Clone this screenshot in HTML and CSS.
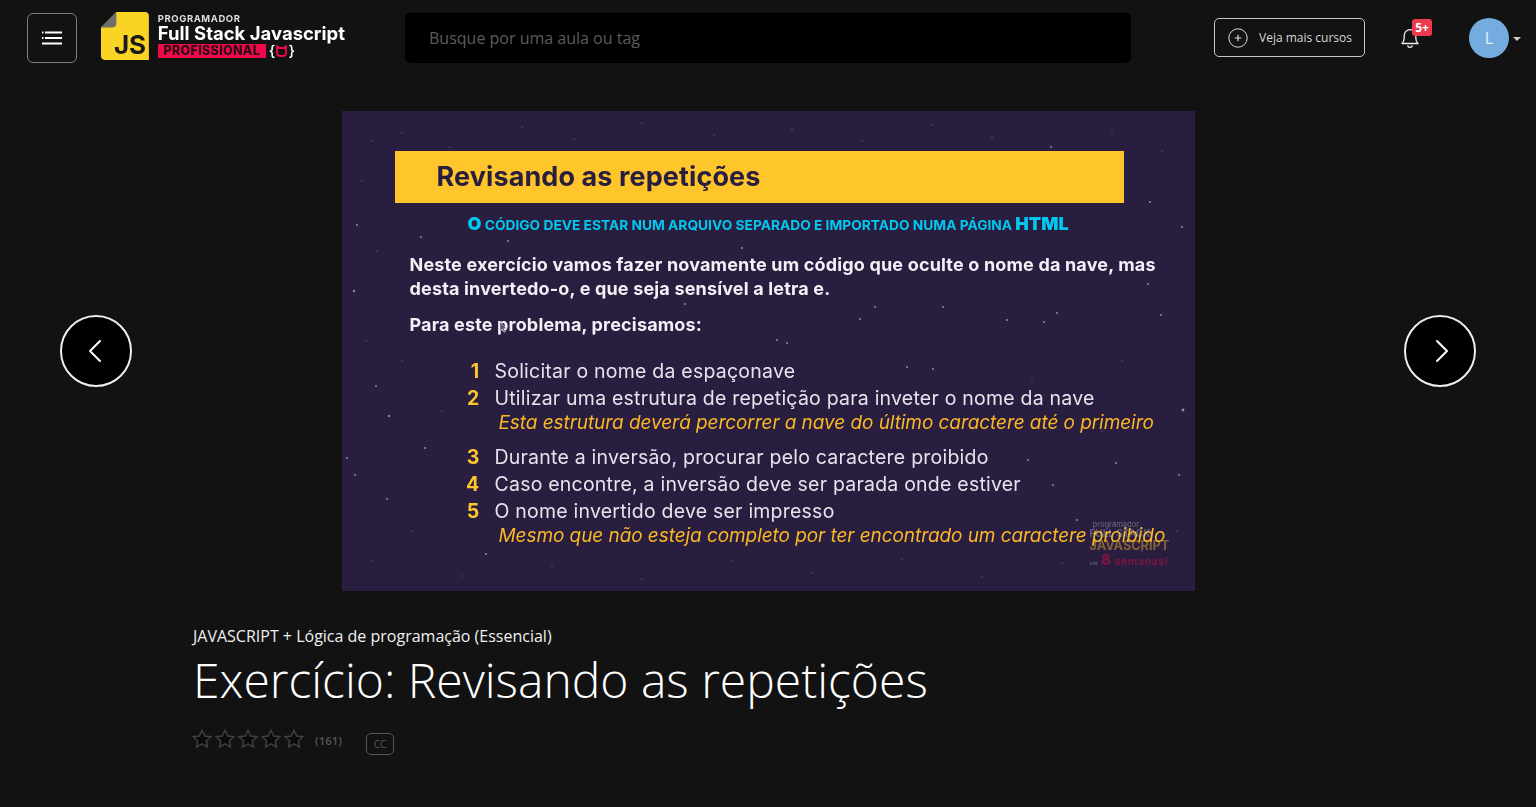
FILE: index.html
```html
<!DOCTYPE html>
<html lang="en">
<head>
    <meta charset="UTF-8">
    <meta name="viewport" content="width=device-width, initial-scale=1.0">
    <title>Exercício: Revisando as repetições</title>
    <link rel="stylesheet" href="styles.css">
</head>
<body>
    <header class="topbar">
        <button class="menu-btn" aria-label="Menu">
            <svg width="20" height="14" viewBox="0 0 20 14">
                <path d="M3 1.500h17M0 1.500h1.500M3 7h17M0 7h1.500M0 12.500h20" stroke="#fff" stroke-width="2" fill="none"/>
            </svg>
        </button>

        <div class="logo">
            <svg class="logo-icon" width="50" height="50" viewBox="0 0 50 50">
                <path d="M16 0h30a4 4 0 0 1 4 4v46H4a4 4 0 0 1-4-4V16z" fill="#fad424"/>
                <path d="M16 0v12a4 4 0 0 1-4 4H0z" fill="#6e6e6e"/>
            </svg>
            <span class="logo-js">JS</span>
            <div class="logo-text">
                <span class="logo-small">PROGRAMADOR</span>
                <span class="logo-big">Full Stack Javascript</span>
                <span class="logo-row">
                    <span class="logo-pro">PROFISSIONAL</span>
                    <span class="logo-brace">{<svg width="11" height="12" viewBox="0 0 11 12"><path d="M1 1l2 2h5l2-2v7a3 3 0 0 1-3 3H4a3 3 0 0 1-3-3z" fill="none" stroke="#f0094a" stroke-width="1.800"/></svg>}</span>
                </span>
            </div>
        </div>

        <div class="search">Busque por uma aula ou tag</div>

        <div class="topbar-right">
            <button class="more-btn">
                <svg width="20" height="20" viewBox="0 0 20 20">
                    <circle cx="10" cy="10" r="9.200" fill="none" stroke="#ddd" stroke-width="1"/>
                    <path d="M10 6.800v6.400M6.800 10h6.400" stroke="#ddd" stroke-width="1.200"/>
                </svg>
                Veja mais cursos
            </button>
            <div class="bell">
                <svg width="18" height="22" viewBox="0 0 18 22">
                    <path d="M1 16.500c1.600-1.400 2.200-2.600 2.200-5.500V8.500a5.800 5.800 0 0 1 11.600 0V11c0 2.900.6 4.100 2.200 5.500z" fill="none" stroke="#eee" stroke-width="1.300" stroke-linejoin="round"/>
                    <path d="M6.500 18.500a2.600 2.600 0 0 0 5 0" fill="none" stroke="#eee" stroke-width="1.300"/>
                </svg>
                <span class="badge">5+</span>
            </div>
            <div class="avatar">L</div>
            <span class="caret"></span>
        </div>
    </header>

    <main>
        <section class="player">
            <button class="arrow arrow-prev" aria-label="Anterior">
                <svg width="16" height="24" viewBox="0 0 16 24"><path d="M13 2L3 12l10 10" fill="none" stroke="#fff" stroke-width="2" stroke-linecap="round" stroke-linejoin="round"/></svg>
            </button>

            <div class="slide">
                <svg class="slide-stars" width="853" height="480" viewBox="0 0 853 480" fill="#8f88a8">
                    <circle cx="15" cy="114" r="1"/><circle cx="12" cy="180" r="1.200"/><circle cx="79" cy="126" r="1"/>
                    <circle cx="166" cy="130" r="1"/><circle cx="400" cy="137" r="1"/><circle cx="343" cy="193" r="1"/>
                    <circle cx="808" cy="91" r="1"/><circle cx="840" cy="116" r="1"/><circle cx="715" cy="202" r="1"/>
                    <circle cx="665" cy="209" r="1"/><circle cx="702" cy="211" r="1"/><circle cx="601" cy="196" r="1"/>
                    <circle cx="533" cy="196" r="1"/><circle cx="518" cy="208" r="1"/><circle cx="819" cy="204" r="1"/>
                    <circle cx="435" cy="229" r="1"/><circle cx="445" cy="232" r="1"/><circle cx="806" cy="173" r="1"/>
                    <circle cx="709" cy="36" r="1"/><circle cx="47" cy="305" r="1.200"/><circle cx="13" cy="364" r="1"/>
                    <circle cx="5" cy="347" r="1"/><circle cx="34" cy="275" r="1"/><circle cx="83" cy="337" r="1"/>
                    <circle cx="45" cy="388" r="1"/><circle cx="144" cy="443" r="1"/><circle cx="841" cy="299" r="1.400"/>
                    <circle cx="565" cy="256" r="1"/><circle cx="591" cy="258" r="1"/><circle cx="686" cy="349" r="1"/>
                    <circle cx="774" cy="352" r="1"/><circle cx="837" cy="364" r="1"/><circle cx="711" cy="374" r="1"/>
                    <circle cx="735" cy="409" r="1"/>
                    <g opacity=".45">
                        <circle cx="30" cy="30" r=".8"/><circle cx="60" cy="22" r=".8"/><circle cx="108" cy="36" r=".8"/>
                        <circle cx="180" cy="16" r=".8"/><circle cx="232" cy="28" r=".8"/><circle cx="300" cy="12" r=".8"/>
                        <circle cx="372" cy="24" r=".8"/><circle cx="450" cy="18" r=".8"/><circle cx="520" cy="30" r=".8"/>
                        <circle cx="590" cy="14" r=".8"/><circle cx="650" cy="26" r=".8"/><circle cx="770" cy="20" r=".8"/>
                        <circle cx="820" cy="40" r=".8"/><circle cx="20" cy="70" r=".8"/><circle cx="35" cy="140" r=".8"/>
                        <circle cx="24" cy="230" r=".8"/><circle cx="60" cy="250" r=".8"/><circle cx="100" cy="300" r=".8"/>
                        <circle cx="70" cy="420" r=".8"/><circle cx="30" cy="450" r=".8"/><circle cx="120" cy="465" r=".8"/>
                        <circle cx="210" cy="455" r=".8"/><circle cx="300" cy="468" r=".8"/><circle cx="390" cy="450" r=".8"/>
                        <circle cx="470" cy="462" r=".8"/><circle cx="560" cy="448" r=".8"/><circle cx="640" cy="466" r=".8"/>
                        <circle cx="720" cy="452" r=".8"/><circle cx="800" cy="440" r=".8"/><circle cx="835" cy="420" r=".8"/>
                        <circle cx="780" cy="250" r=".8"/><circle cx="690" cy="270" r=".8"/><circle cx="760" cy="320" r=".8"/>
                    </g>
                </svg>

                <div class="slide-content">
                    <h1 class="slide-title">Revisando as repetições</h1>
                    <p class="slide-sub"><b>O</b> CÓDIGO DEVE ESTAR NUM ARQUIVO SEPARADO E IMPORTADO NUMA PÁGINA <b>HTML</b></p>
                    <p class="slide-text">Neste exercício vamos fazer novamente um código que oculte o nome da nave, mas<br>desta invertedo-o, e que seja sensível a letra e.</p>
                    <p class="slide-text slide-need">Para este problema, precisamos:</p>

                    <ol class="steps">
                        <li class="step"><span class="num">1</span>Solicitar o nome da espaçonave</li>
                        <li class="step"><span class="num">2</span>Utilizar uma estrutura de repetição para inveter o nome da nave</li>
                        <li class="note">Esta estrutura deverá percorrer a nave do último caractere até o primeiro</li>
                        <li class="step step-gap"><span class="num">3</span>Durante a inversão, procurar pelo caractere proibido</li>
                        <li class="step"><span class="num">4</span>Caso encontre, a inversão deve ser parada onde estiver</li>
                        <li class="step"><span class="num">5</span>O nome invertido deve ser impresso</li>
                        <li class="note">Mesmo que não esteja completo por ter encontrado um caractere proibido</li>
                    </ol>
                </div>

                <svg class="slide-cursor" width="8" height="12" viewBox="0 0 8 12"><path d="M1 1v9l2.200-2 1.800 3.500 1.500-.8L4.800 7.500H7.500z" fill="#5d566f" stroke="#cfcfd6" stroke-width=".6"/></svg>

                <div class="watermark">
                    <span class="wm-small">programador</span>
                    <span class="wm-mid">FULL STACK</span>
                    <span class="wm-big">JAVASCRIPT</span>
                    <span class="wm-red"><i>em</i> <b>8</b> semanas!</span>
                </div>
            </div>

            <button class="arrow arrow-next" aria-label="Próximo">
                <svg width="16" height="24" viewBox="0 0 16 24"><path d="M3 2l10 10L3 22" fill="none" stroke="#fff" stroke-width="2" stroke-linecap="round" stroke-linejoin="round"/></svg>
            </button>
        </section>

        <section class="info">
            <div class="course">JAVASCRIPT + Lógica de programação (Essencial)</div>
            <h2 class="lesson">Exercício: Revisando as repetições</h2>
            <div class="meta">
                <div class="stars">
                    <svg width="20" height="19" viewBox="0 0 24 23"><path class="star" d="M12 1.500l3.200 6.900 7.500.9-5.500 5.100 1.400 7.400L12 18.100l-6.600 3.700 1.400-7.400L1.300 9.300l7.500-.9z"/></svg>
                    <svg width="20" height="19" viewBox="0 0 24 23"><path class="star" d="M12 1.500l3.200 6.900 7.500.9-5.500 5.100 1.400 7.400L12 18.100l-6.600 3.700 1.400-7.400L1.300 9.300l7.500-.9z"/></svg>
                    <svg width="20" height="19" viewBox="0 0 24 23"><path class="star" d="M12 1.500l3.200 6.900 7.500.9-5.500 5.100 1.400 7.400L12 18.100l-6.600 3.700 1.400-7.400L1.300 9.300l7.500-.9z"/></svg>
                    <svg width="20" height="19" viewBox="0 0 24 23"><path class="star" d="M12 1.500l3.200 6.900 7.500.9-5.500 5.100 1.400 7.400L12 18.100l-6.600 3.700 1.400-7.400L1.300 9.300l7.500-.9z"/></svg>
                    <svg width="20" height="19" viewBox="0 0 24 23"><path class="star" d="M12 1.500l3.200 6.900 7.500.9-5.500 5.100 1.400 7.400L12 18.100l-6.600 3.700 1.400-7.400L1.300 9.300l7.500-.9z"/></svg>
                </div>
                <span class="votes">(161)</span>
                <span class="cc">CC</span>
            </div>
        </section>
    </main>
</body>
</html>
```

FILE: styles.css
```css
* {
    box-sizing: border-box;
}

body {
    margin: 0;
    height: 807px;
    overflow: hidden;
    background-color: #121212;
    color: #fff;
    font-family: "Open Sans", sans-serif;
}

button {
    font-family: inherit;
    cursor: pointer;
}

/* top bar */
.topbar {
    display: flex;
    align-items: center;
    height: 75px;
    padding: 0 15px 0 27px;
}

.menu-btn {
    display: flex;
    align-items: center;
    justify-content: center;
    width: 50px;
    height: 50px;
    padding: 0;
    background: transparent;
    border: 1px solid #7c7c7c;
    border-radius: 6px;
}

.logo {
    position: relative;
    display: flex;
    gap: 9px;
    width: 244px;
    height: 50px;
    margin: 0 0 4px 24px;
    filter: blur(.3px);
}

.logo-js {
    position: absolute;
    left: 13px;
    top: 19px;
    color: #1b1b1b;
    font-family: "Inter", sans-serif;
    font-size: 26px;
    line-height: 30px;
    font-weight: 700;
    letter-spacing: -.3px;
}

.logo-text {
    display: flex;
    flex-direction: column;
    font-family: "Inter", sans-serif;
    font-weight: 700;
}

.logo-small {
    margin-top: 2px;
    color: #ddd;
    font-size: 9.500px;
    line-height: 11px;
    letter-spacing: .55px;
}

.logo-big {
    font-size: 18.500px;
    line-height: 19px;
    letter-spacing: 0;
    white-space: nowrap;
}

.logo-row {
    display: flex;
    align-items: center;
    gap: 3px;
    margin-top: 1px;
}

.logo-pro {
    width: 108px;
    height: 14px;
    background-color: #f0094a;
    color: #2a0a16;
    font-size: 12.500px;
    line-height: 14px;
    font-weight: 800;
    letter-spacing: .3px;
    text-align: center;
    white-space: nowrap;
}

.logo-brace {
    display: flex;
    align-items: center;
    gap: 1px;
    font-size: 15px;
    line-height: 14px;
    font-weight: 500;
}

.search {
    width: 726px;
    height: 50px;
    margin-left: 60px;
    padding-left: 24px;
    background-color: #000;
    border-radius: 5px;
    color: #5c5c5c;
    font-size: 16px;
    line-height: 50px;
}

.topbar-right {
    display: flex;
    align-items: center;
    margin-left: auto;
}

.more-btn {
    display: flex;
    align-items: center;
    gap: 11px;
    width: 151px;
    height: 39px;
    padding: 0 0 0 13px;
    background: transparent;
    border: 1px solid #c8c8c8;
    border-radius: 5px;
    color: #d8d8d8;
    font-size: 12px;
    font-weight: 400;
    white-space: nowrap;
}

.bell {
    position: relative;
    display: flex;
    width: 18px;
    height: 22px;
    margin-left: 36px;
}

.badge {
    position: absolute;
    left: 11px;
    top: -8px;
    width: 20px;
    height: 17px;
    background-color: #ed3a4f;
    border-radius: 3px;
    font-size: 12px;
    line-height: 17px;
    font-weight: 700;
    text-align: center;
}

.avatar {
    width: 40px;
    height: 40px;
    margin-left: 50px;
    background-color: #75ace0;
    border-radius: 50%;
    color: #eaf2fa;
    font-size: 16px;
    line-height: 40px;
    text-align: center;
}

.caret {
    width: 0;
    height: 0;
    margin: 2px 0 0 4px;
    border-top: 4px solid #ccc;
    border-left: 4px solid transparent;
    border-right: 4px solid transparent;
}

/* player */
.player {
    display: flex;
    align-items: center;
    justify-content: space-between;
    margin-top: 36px;
    padding: 0 60px;
}

.arrow {
    display: flex;
    align-items: center;
    justify-content: center;
    width: 72px;
    height: 72px;
    padding: 0;
    background-color: #000;
    border: 2px solid #eee;
    border-radius: 50%;
}

.arrow-prev {
    padding-right: 3px;
}

.arrow-next {
    padding-left: 3px;
}

.slide {
    position: relative;
    width: 853px;
    height: 480px;
    overflow: hidden;
    background-color: #291e3f;
    font-family: "Inter", sans-serif;
}

.slide-stars {
    position: absolute;
    left: 0;
    top: 0;
}

.slide-content {
    position: relative;
    padding-top: 40px;
    filter: blur(.35px);
}

.slide-title {
    width: 729px;
    height: 52px;
    margin: 0 0 0 53px;
    padding-left: 42px;
    background-color: #fec62a;
    color: #291e3f;
    font-size: 27px;
    line-height: 52px;
    font-weight: 700;
    letter-spacing: .1px;
}

.slide-sub {
    margin: 9px 0 0;
    padding-left: 126px;
    color: #00c8f0;
    font-size: 13.750px;
    line-height: 24px;
    font-weight: 700;
    white-space: nowrap;
}

.slide-sub b {
    font-size: 18px;
}

.slide-text {
    margin: 16px 0 0 68px;
    color: #f3f1f6;
    font-size: 18px;
    line-height: 24px;
    font-weight: 700;
    letter-spacing: .17px;
    white-space: nowrap;
}

.slide-need {
    margin-top: 12px;
}

.steps {
    margin: 21px 0 0;
    padding: 0;
    list-style: none;
    white-space: nowrap;
}

.step {
    display: flex;
    gap: 15px;
    margin-top: 1px;
    color: #e6e3ec;
    font-size: 19.500px;
    line-height: 26px;
    letter-spacing: .22px;
}

.step:first-child {
    margin-top: 0;
}

.step-gap {
    margin-top: 8px;
}

.num {
    width: 138px;
    color: #fec62a;
    font-weight: 700;
    text-align: right;
}

.note {
    margin: -1px 0 0 157px;
    color: #fbb826;
    font-size: 19px;
    line-height: 26px;
    font-style: italic;
    letter-spacing: -.07px;
}

.slide-cursor {
    position: absolute;
    left: 157px;
    top: 210px;
}

.watermark {
    position: absolute;
    left: 748px;
    top: 410px;
    display: flex;
    flex-direction: column;
    width: 84px;
    font-weight: 700;
    opacity: .4;
    white-space: nowrap;
}

.wm-small {
    margin-left: 3px;
    color: #bbb;
    font-size: 7.500px;
    line-height: 7px;
    font-weight: 500;
}

.wm-mid {
    color: #bbb;
    font-size: 10px;
    line-height: 11px;
}

.wm-big {
    color: #fec62a;
    font-size: 12.700px;
    line-height: 14px;
}

.wm-red {
    color: #f0094a;
    font-size: 10.500px;
    line-height: 14px;
    letter-spacing: .5px;
}

.wm-red i {
    color: #bbb;
    font-size: 5px;
}

.wm-red b {
    font-size: 15px;
}

/* lesson info */
.info {
    padding: 34px 0 0 193px;
}

.course {
    font-size: 16px;
    line-height: 22px;
    font-weight: 400;
    color: #f0f0f0;
}

.lesson {
    margin: -1px 0 0;
    font-size: 48px;
    line-height: 68px;
    font-weight: 300;
    color: #fff;
}

.meta {
    display: flex;
    align-items: flex-start;
    margin: 15px 0 0 -1px;
}

.stars {
    display: flex;
    gap: 3px;
}

.star {
    fill: #0a0a0a;
    stroke: #404040;
    stroke-width: 1.800;
}

.votes {
    margin: 4px 0 0 11px;
    color: #565656;
    font-size: 11.500px;
    line-height: 16px;
    font-weight: 600;
}

.cc {
    width: 28px;
    height: 22px;
    margin: 4px 0 0 24px;
    border: 1px solid #565656;
    border-radius: 5px;
    color: #565656;
    font-size: 10px;
    line-height: 20px;
    text-align: center;
}
```
